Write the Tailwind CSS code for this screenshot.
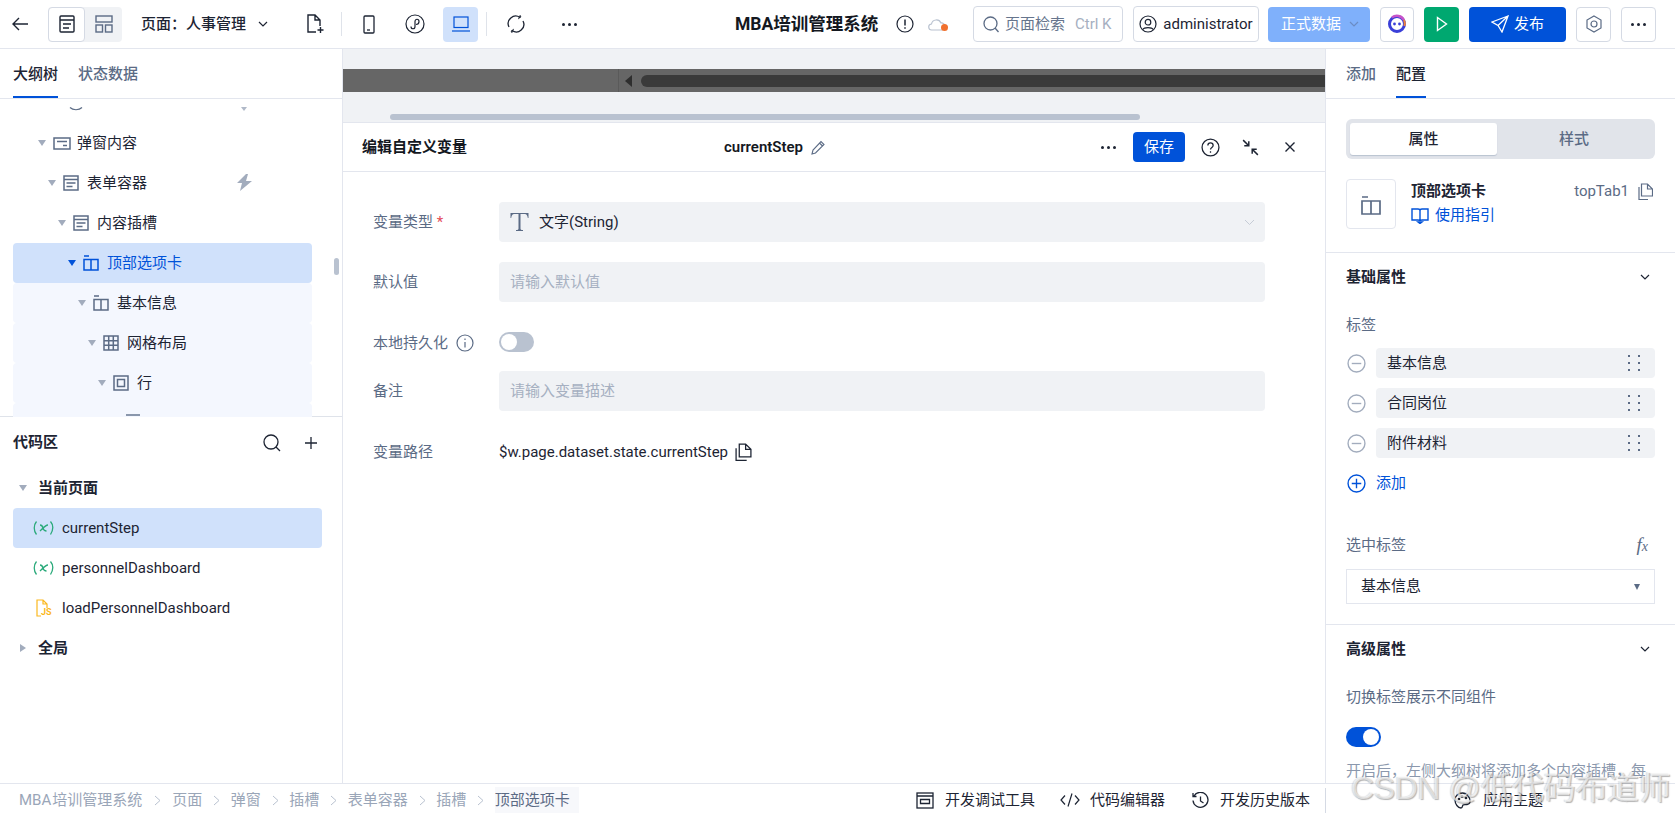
<!DOCTYPE html>
<html lang="zh-CN">
<head>
<meta charset="UTF-8">
<title>MBA 培训管理系统</title>
<script src="https://cdn.jsdelivr.net/npm/@tailwindcss/browser@4"></script>
</head>
<body class="relative h-screen overflow-hidden bg-white flex flex-col text-[15px] text-[#1d2433] font-['Roboto','Noto_Sans_CJK_SC',sans-serif]">

<!-- top bar -->
<header class="h-[49px] shrink-0 border-b border-[#e3e6ee] flex items-center relative">
  <svg class="w-[18px] h-[18px] ml-[11px] shrink-0" viewBox="0 0 18 18" fill="none" stroke="#1d2433" stroke-width="1.4"><path d="M2 9h15M8 3 2 9l6 6"/></svg>
  <div class="ml-[19px] w-[74px] h-[35px] rounded bg-[#f0f2f5] flex shrink-0">
    <div class="w-[37px] h-[35px] bg-white border border-[#d5dae4] rounded flex items-center justify-center">
      <svg class="w-[16px] h-[18px]" viewBox="0 0 16 18" fill="none" stroke="#1d2433" stroke-width="1.4"><rect x="1" y="1" width="14" height="16" rx="1"/><path d="M1 5h14M4 9h8M4 13h6"/></svg>
    </div>
    <div class="w-[37px] h-[35px] flex items-center justify-center">
      <svg class="w-[18px] h-[18px]" viewBox="0 0 18 18" fill="none" stroke="#5b6b85" stroke-width="1.4"><rect x="1" y="1" width="16" height="6"/><rect x="1" y="10" width="6.5" height="7"/><rect x="10.5" y="10" width="6.5" height="7"/></svg>
    </div>
  </div>
  <span class="ml-[19px] font-medium w-[107px] whitespace-nowrap">页面：人事管理</span>
  <svg class="w-[12px] h-[12px] ml-[9px]" viewBox="0 0 12 12" fill="none" stroke="#1d2433" stroke-width="1.2"><path d="m2 4 4 4 4-4"/></svg>
  <svg class="w-[18px] h-[20px] ml-[37px]" viewBox="0 0 18 20" fill="none" stroke="#1d2433" stroke-width="1.4"><path d="M10 18H2V1h7l5 5v6M9 1v5h5M11.500 16h6M14.500 13v6"/></svg>
  <div class="w-px h-[24px] bg-[#dfe3ea] ml-[17px]"></div>
  <svg class="w-[12px] h-[19px] ml-[21px]" viewBox="0 0 12 19" fill="none" stroke="#1d2433" stroke-width="1.3"><rect x="1" y="1" width="10" height="17" rx="1"/><path d="M4 15h3"/></svg>
  <svg class="w-[20px] h-[20px] ml-[30px]" viewBox="0 0 20 20" fill="none" stroke="#1d2433" stroke-width="1.2"><circle cx="10" cy="10" r="9"/><path d="M6 12.500c0 3 4 3 4 0v-5c0-3 4-3 4 0s-2 3-3 3"/></svg>
  <div class="ml-[18px] w-[35px] h-[35px] rounded bg-[#d0e1fb] flex items-center justify-center">
    <svg class="w-[18px] h-[16px]" viewBox="0 0 18 16" fill="none" stroke="#0052d9" stroke-width="1.2"><rect x="2" y="1" width="14" height="10.500"/><path d="M0 15h18"/></svg>
  </div>
  <div class="w-px h-[24px] bg-[#dfe3ea] ml-[8px]"></div>
  <svg class="w-[18px] h-[18px] ml-[20px]" viewBox="0 0 18 18" fill="none" stroke="#1d2433" stroke-width="1.3"><path d="M2 12A7.500 7.500 0 0 1 13 2.500M16 6a7.500 7.500 0 0 1-11 9.500"/><path d="m11 4 3-2-1-2M7 14l-3 2 1 2" fill="#1d2433" stroke-width=".6"/></svg>
  <div class="ml-[37px] flex gap-[3px]"><i class="w-[3px] h-[3px] rounded-full bg-[#1d2433]"></i><i class="w-[3px] h-[3px] rounded-full bg-[#1d2433]"></i><i class="w-[3px] h-[3px] rounded-full bg-[#1d2433]"></i></div>

  <span class="ml-[158px] text-[17.500px] font-bold whitespace-nowrap text-[#14181f] w-[145px]">MBA培训管理系统</span>
  <svg class="w-[18px] h-[18px] ml-[16px]" viewBox="0 0 18 18" fill="none" stroke="#1d2433" stroke-width="1.2"><circle cx="9" cy="9" r="8"/><path d="M9 4.500v6M9 12.300v1.500" stroke-width="1.5"/></svg>
  <span class="relative ml-[14px] w-[18px] h-[14px]">
    <svg class="w-[18px] h-[14px]" viewBox="0 0 18 14" fill="none" stroke="#b9c2d0" stroke-width="1.2"><path d="M4 13a3 3 0 0 1-.5-6A5 5 0 0 1 13 6a3.500 3.500 0 0 1 1 7z"/></svg>
    <i class="absolute right-[-2px] bottom-0 w-[7px] h-[7px] rounded-full bg-[#f0702e]"></i>
  </span>
  <div class="ml-[27px] w-[150px] h-[36px] border border-[#d5dae4] rounded flex items-center pl-[9px] whitespace-nowrap shrink-0">
    <svg class="w-[16px] h-[17px] shrink-0" viewBox="0 0 16 17" fill="none" stroke="#5b6b85" stroke-width="1.3"><circle cx="7.500" cy="7.500" r="6.500"/><path d="m12 12 3.500 4"/></svg>
    <span class="ml-[6px] text-[#66758d] w-[60px]">页面检索</span>
    <span class="ml-[10px] text-[#a6b0c1]">Ctrl K</span>
  </div>
  <div class="ml-[10px] w-[126px] h-[36px] border border-[#d5dae4] rounded flex items-center justify-center gap-[6px] shrink-0">
    <svg class="w-[18px] h-[18px]" viewBox="0 0 18 18" fill="none" stroke="#1d2433" stroke-width="1.2"><circle cx="9" cy="9" r="8"/><circle cx="9" cy="7.200" r="2.800"/><path d="M4 14.500c1-2.500 9-2.500 10 0"/></svg>
    <span>administrator</span>
  </div>
  <div class="ml-[9px] w-[102px] h-[35px] rounded bg-[#7fb0fb] text-white flex items-center pl-[13px] shrink-0">
    <span class="w-[60px] whitespace-nowrap">正式数据</span>
    <svg class="w-[12px] h-[12px] ml-[7px]" viewBox="0 0 12 12" fill="none" stroke="#6b8cc4" stroke-width="1.2"><path d="m2 4 4 4 4-4"/></svg>
  </div>
  <div class="ml-[10px] w-[34px] h-[35px] rounded border border-[#d5dae4] flex items-center justify-center shrink-0">
    <svg class="w-[20px] h-[20px]" viewBox="0 0 20 20" fill="none"><circle cx="10" cy="10" r="7.500" stroke="#3a3fd8" stroke-width="3"/><path d="M5 3.500A8 8 0 0 1 17 6" stroke="#c653c9" stroke-width="2.500"/><path d="M17 6a8 8 0 0 1 .5 6" stroke="#f0823c" stroke-width="2"/><circle cx="7.500" cy="10" r="1.400" fill="#3a3fd8"/><circle cx="12.500" cy="10" r="1.400" fill="#3a3fd8"/></svg>
  </div>
  <div class="ml-[10px] w-[35px] h-[35px] rounded bg-[#00a870] flex items-center justify-center shrink-0">
    <svg class="w-[12px] h-[16px]" viewBox="0 0 12 16" fill="none" stroke="#fff" stroke-width="1.4"><path d="M1.500 1.500v13L10.500 8z"/></svg>
  </div>
  <div class="ml-[10px] w-[97px] h-[35px] rounded bg-[#0052d9] text-white flex items-center justify-center gap-[5px] shrink-0">
    <svg class="w-[18px] h-[18px]" viewBox="0 0 18 18" fill="none" stroke="#fff" stroke-width="1.3"><path d="M17 1 1 7l6 3.500L11 17zM7 10.500 17 1"/></svg>
    <span>发布</span>
  </div>
  <div class="ml-[10px] w-[35px] h-[35px] rounded border border-[#d5dae4] flex items-center justify-center shrink-0">
    <svg class="w-[16px] h-[18px]" viewBox="0 0 16 18" fill="none" stroke="#5b6b85" stroke-width="1.2"><path d="M8 1 15 5v8l-7 4-7-4V5z"/><circle cx="8" cy="9" r="3"/></svg>
  </div>
  <div class="ml-[10px] w-[35px] h-[35px] rounded border border-[#d5dae4] flex items-center justify-center gap-[3px] shrink-0"><i class="w-[3px] h-[3px] rounded-full bg-[#1d2433]"></i><i class="w-[3px] h-[3px] rounded-full bg-[#1d2433]"></i><i class="w-[3px] h-[3px] rounded-full bg-[#1d2433]"></i></div>
</header>

<div class="flex-1 min-h-0 flex">
  <!-- left panel -->
  <aside class="w-[343px] shrink-0 border-r border-[#e3e6ee] flex flex-col">
    <div class="h-[50px] shrink-0 border-b border-[#e3e6ee] flex pl-[13px] gap-[20px] relative">
      <span class="h-[49px] leading-[51px] font-medium border-b-2 border-[#0052d9]">大纲树</span>
      <span class="h-[49px] leading-[51px] font-medium text-[#5b6b85]">状态数据</span>
    </div>
    <div class="h-[317px] shrink-0 pt-[8px] pl-[13px] pr-[30px] relative">
      <div class="h-[310px] overflow-hidden">
        <div class="h-10 -mt-[24px] relative">
          <svg class="absolute left-[56px] top-[22px] w-[14px] h-[8px]" viewBox="0 0 14 8" fill="none" stroke="#5b6b85" stroke-width="1.2"><path d="M1 2.500c3 3 9 3 12 0"/></svg>
          <i class="absolute left-[228px] top-[24px] w-0 h-0 border-x-[3px] border-x-transparent border-t-[4px] border-t-[#b0b9c8]"></i>
        </div>
        <div class="h-10 flex items-center pl-[25px]">
          <i class="w-0 h-0 border-x-[4.500px] border-x-transparent border-t-[6px] border-t-[#a2acbd]"></i>
          <svg class="ml-[7px] w-[18px] h-[13px]" viewBox="0 0 18 13" fill="none" stroke="#5b6b85" stroke-width="1.5"><rect x="1" y="1" width="16" height="11"/><path d="M4 4.500h10M10 8.500h4"/></svg>
          <span class="ml-[6px]">弹窗内容</span>
        </div>
        <div class="h-10 flex items-center pl-[35px] relative">
          <i class="w-0 h-0 border-x-[4.500px] border-x-transparent border-t-[6px] border-t-[#a2acbd]"></i>
          <svg class="ml-[7px] w-[16px] h-[16px]" viewBox="0 0 16 16" fill="none" stroke="#5b6b85" stroke-width="1.5"><rect x="1" y="1" width="14" height="14"/><path d="M1 4.500h14M3.500 8h9M3.500 11.500h6"/></svg>
          <span class="ml-[8px]">表单容器</span>
          <svg class="absolute left-[223px] top-[11px] w-[17px] h-[17px]" viewBox="0 0 17 17" fill="#a2acbd"><path d="M10 0 1 9h5l-2 8 12-10h-6l2-7z"/></svg>
        </div>
        <div class="h-10 flex items-center pl-[45px]">
          <i class="w-0 h-0 border-x-[4.500px] border-x-transparent border-t-[6px] border-t-[#a2acbd]"></i>
          <svg class="ml-[7px] w-[16px] h-[16px]" viewBox="0 0 16 16" fill="none" stroke="#5b6b85" stroke-width="1.5"><rect x="1" y="1" width="14" height="14"/><path d="M1 4.500h14M3.500 8h9M3.500 11.500h6"/></svg>
          <span class="ml-[8px]">内容插槽</span>
        </div>
        <div class="h-10 flex items-center pl-[55px] bg-[#d0e1fb] rounded text-[#0052d9]">
          <i class="w-0 h-0 border-x-[4.500px] border-x-transparent border-t-[6px] border-t-[#0052d9]"></i>
          <svg class="ml-[7px] w-[16px] h-[16px]" viewBox="0 0 16 16" fill="none" stroke="#0052d9" stroke-width="1.5"><path d="M1 1h5M1 4.500h14V15H1zM8 4.500V15"/></svg>
          <span class="ml-[8px]">顶部选项卡</span>
        </div>
        <div class="h-10 flex items-center pl-[65px] bg-[#f4f7fe] rounded">
          <i class="w-0 h-0 border-x-[4.500px] border-x-transparent border-t-[6px] border-t-[#a2acbd]"></i>
          <svg class="ml-[7px] w-[16px] h-[16px]" viewBox="0 0 16 16" fill="none" stroke="#5b6b85" stroke-width="1.5"><path d="M1 1h5M1 4.500h14V15H1zM8 4.500V15"/></svg>
          <span class="ml-[8px]">基本信息</span>
        </div>
        <div class="h-10 flex items-center pl-[75px] bg-[#f4f7fe] rounded">
          <i class="w-0 h-0 border-x-[4.500px] border-x-transparent border-t-[6px] border-t-[#a2acbd]"></i>
          <svg class="ml-[7px] w-[16px] h-[16px]" viewBox="0 0 16 16" fill="none" stroke="#5b6b85" stroke-width="1.5"><rect x="1" y="1" width="14" height="14"/><path d="M5.700 1v14M10.300 1v14M1 5.700h14M1 10.300h14"/></svg>
          <span class="ml-[8px]">网格布局</span>
        </div>
        <div class="h-10 flex items-center pl-[85px] bg-[#f4f7fe] rounded">
          <i class="w-0 h-0 border-x-[4.500px] border-x-transparent border-t-[6px] border-t-[#a2acbd]"></i>
          <svg class="ml-[7px] w-[16px] h-[16px]" viewBox="0 0 16 16" fill="none" stroke="#5b6b85" stroke-width="1.5"><rect x="1" y="1" width="14" height="14"/><rect x="4.500" y="4.500" width="7" height="7"/></svg>
          <span class="ml-[8px]">行</span>
        </div>
        <div class="h-10 bg-[#f4f7fe] rounded relative">
          <i class="absolute left-[113px] top-[11px] w-[14px] h-[2px] bg-[#8a97ac]"></i>
        </div>
      </div>
      <i class="absolute left-[334px] top-[159px] w-[5px] h-[17px] rounded-full bg-[#b9c2d0]"></i>
    </div>
    <div class="border-t border-[#dfe3ea] flex-1 px-[13px] pr-[20px]">
      <div class="h-[51px] flex items-center justify-between font-semibold">
        <span>代码区</span>
        <div class="flex items-center gap-[24px] pr-[5px]">
          <svg class="w-[18px] h-[18px]" viewBox="0 0 18 18" fill="none" stroke="#1d2433" stroke-width="1.3"><circle cx="8" cy="8" r="7"/><path d="m13 13 4 4"/></svg>
          <svg class="w-[12px] h-[12px]" viewBox="0 0 12 12" fill="none" stroke="#1d2433" stroke-width="1.3"><path d="M6 0v12M0 6h12"/></svg>
        </div>
      </div>
      <div class="h-10 flex items-center pl-[6px] font-semibold">
        <i class="w-0 h-0 border-x-[4.500px] border-x-transparent border-t-[6px] border-t-[#a2acbd]"></i>
        <span class="ml-[11px]">当前页面</span>
      </div>
      <div class="h-10 flex items-center pl-[20px] bg-[#d0e1fb] rounded">
        <svg class="w-[21px] h-[16px]" viewBox="0 0 21 16" fill="none" stroke="#2baa7b" stroke-width="1.3"><path d="M3.500 1.500C.5 5 .5 11 3.500 14.500M17.500 1.500c3 3.500 3 8 0 13M7 5c2 0 2.500 1 3 3s1.500 3 3.500 3M15 5c-2.500 0-5 3-8 6"/></svg>
        <span class="ml-[8px]">currentStep</span>
      </div>
      <div class="h-10 flex items-center pl-[20px]">
        <svg class="w-[21px] h-[16px]" viewBox="0 0 21 16" fill="none" stroke="#2baa7b" stroke-width="1.3"><path d="M3.500 1.500C.5 5 .5 11 3.500 14.500M17.500 1.500c3 3.500 3 8 0 13M7 5c2 0 2.500 1 3 3s1.500 3 3.500 3M15 5c-2.500 0-5 3-8 6"/></svg>
        <span class="ml-[8px]">personnelDashboard</span>
      </div>
      <div class="h-10 flex items-center pl-[23px]">
        <span class="relative w-[17px] h-[18px]">
          <svg class="w-[17px] h-[18px]" viewBox="0 0 17 18" fill="none" stroke="#fbb81e" stroke-width="1.2"><path d="M5 17H1V1h6l4 4v4M7 1v4h4"/></svg>
          <span class="absolute left-[5px] top-[8px] text-[9px] leading-[10px] font-bold text-[#fbb81e]">JS</span>
        </span>
        <span class="ml-[9px]">loadPersonnelDashboard</span>
      </div>
      <div class="h-10 flex items-center pl-[7px] font-semibold">
        <i class="w-0 h-0 border-y-[4.500px] border-y-transparent border-l-[6px] border-l-[#a2acbd]"></i>
        <span class="ml-[12px]">全局</span>
      </div>
    </div>
  </aside>

  <!-- canvas and variable editor -->
  <main class="flex-1 min-w-0 flex flex-col">
    <div class="h-[74px] shrink-0 bg-[#f0f2f5] border-b border-[#e3e6ee] pt-[20px] relative">
      <div class="h-[23px] bg-[#666666] flex items-center">
        <div class="w-[276px] h-full border-r border-[#5a5a5a] shrink-0"></div>
        <i class="ml-[6px] w-0 h-0 border-y-[6px] border-y-transparent border-r-[7px] border-r-[#2e2e2e]"></i>
        <div class="ml-[9px] flex-1 h-[12px] rounded-l-full bg-[#3a3a3a]"></div>
      </div>
      <i class="absolute left-[47px] top-[65px] w-[750px] h-[6px] rounded-full bg-[#b9c2d0]"></i>
    </div>
    <div class="h-[49px] shrink-0 border-b border-[#e3e6ee] flex items-center relative pl-[19px]">
      <span class="font-semibold text-[#14181f] w-[105px] whitespace-nowrap">编辑自定义变量</span>
      <span class="absolute left-[381px] font-semibold text-[#14181f]">currentStep</span>
      <svg class="absolute left-[468px] top-[17px] w-[15px] h-[15px]" viewBox="0 0 15 15" fill="none" stroke="#5b6b85" stroke-width="1.1"><path d="M1 14l1-4 8-8.500 3 3L4.500 13zM8.500 3l3 3"/></svg>
      <div class="ml-auto flex items-center">
        <div class="flex gap-[3px]"><i class="w-[3px] h-[3px] rounded-full bg-[#1d2433]"></i><i class="w-[3px] h-[3px] rounded-full bg-[#1d2433]"></i><i class="w-[3px] h-[3px] rounded-full bg-[#1d2433]"></i></div>
        <div class="ml-[17px] w-[52px] h-[30px] rounded bg-[#0052d9] text-white flex items-center justify-center">保存</div>
        <svg class="ml-[16px] w-[19px] h-[19px]" viewBox="0 0 18 18" fill="none" stroke="#1d2433" stroke-width="1.2"><circle cx="9" cy="9" r="8"/><path d="M6.500 7c0-3.300 5-3.300 5 0 0 2-2.500 1.800-2.500 4M9 12.500v1.500"/></svg>
        <svg class="ml-[22px] w-[17px] h-[17px]" viewBox="0 0 15 15" fill="none" stroke="#1d2433" stroke-width="1.3"><path d="m1 1 5 5M6 2v4H2M14 14 9 9M9 13V9h4"/></svg>
        <svg class="ml-[26px] mr-[30px] w-[10px] h-[10px]" viewBox="0 0 10 10" fill="none" stroke="#1d2433" stroke-width="1.4"><path d="m.5.500 9 9M9.500.500l-9 9"/></svg>
      </div>
    </div>
    <div class="pt-[30px] pl-[30px] pr-[60px] text-[#5b6b85]">
      <div class="flex items-center h-10">
        <span class="w-[126px]">变量类型 <span class="text-[#e34d59]">*</span></span>
        <div class="flex-1 h-10 rounded bg-[#f0f2f5] flex items-center pl-[11px] pr-[10px] text-[#1d2433]">
          <svg class="w-[19px] h-[18px]" viewBox="0 0 18 18" fill="#5b6b85"><path d="M0 0h18v5h-.7c-.3-2-1-4-3-4H10V15.500c0 1 .7 1.500 2.500 1.500v1h-7v-1c1.800 0 2.500-.5 2.500-1.500V1H3.700c-2 0-2.700 2-3 4H0z"/></svg>
          <span class="ml-[10px]">文字(String)</span>
          <svg class="ml-auto w-[11px] h-[11px]" viewBox="0 0 11 11" fill="none" stroke="#c6ccd6" stroke-width="1"><path d="m1 3 4.500 4.500L10 3"/></svg>
        </div>
      </div>
      <div class="flex items-center h-10 mt-5">
        <span class="w-[126px]">默认值</span>
        <div class="flex-1 h-10 rounded bg-[#f0f2f5] flex items-center pl-[11px] text-[#a6b0c1]">请输入默认值</div>
      </div>
      <div class="flex items-center h-5 mt-[30px]">
        <span class="w-[126px] flex items-center h-5 pt-[2px]">本地持久化
          <svg class="ml-[8px] w-[18px] h-[18px]" viewBox="0 0 18 18" fill="none" stroke="#5b6b85" stroke-width="1.2"><circle cx="9" cy="9" r="8"/><path d="M9 8v5.500M9 4.500v1.500"/></svg>
        </span>
        <div class="w-[35px] h-5 rounded-full bg-[#b9c2d0] p-[2px]"><div class="w-4 h-4 rounded-full bg-white"></div></div>
      </div>
      <div class="flex items-center h-10 mt-[19px]">
        <span class="w-[126px]">备注</span>
        <div class="flex-1 h-10 rounded bg-[#f0f2f5] flex items-center pl-[11px] text-[#a6b0c1]">请输入变量描述</div>
      </div>
      <div class="flex items-center h-10 mt-[21px]">
        <span class="w-[126px]">变量路径</span>
        <span class="text-[#1d2433]">$w.page.dataset.state.currentStep</span>
        <svg class="ml-[7px] w-[17px] h-[18px]" viewBox="0 0 16 17" fill="none" stroke="#1d2433" stroke-width="1.2"><path d="M4 13V1h6l5 5v7zM10 1v5h5M1 5v11.500h10"/></svg>
      </div>
    </div>
  </main>

  <!-- right config panel -->
  <aside class="w-[350px] shrink-0 border-l border-[#e3e6ee] overflow-hidden">
    <div class="h-[50px] border-b border-[#e3e6ee] flex pl-[20px] gap-[20px]">
      <span class="h-[49px] leading-[51px] font-medium text-[#5b6b85]">添加</span>
      <span class="h-[49px] leading-[51px] font-medium border-b-2 border-[#0052d9]">配置</span>
    </div>
    <div class="px-[20px] pr-[20px]">
      <div class="mt-5 h-10 rounded-md bg-[#e1e4ea] p-[4px] flex font-medium">
        <div class="w-[147px] h-[32px] rounded-[3px] bg-white shadow-[0_1px_1px_#b9c2d0] flex items-center justify-center">属性</div>
        <div class="flex-1 flex items-center justify-center text-[#5b6b85]">样式</div>
      </div>
      <div class="mt-5 flex h-[50px]">
        <div class="w-[50px] h-[50px] border border-[#e3e6ee] rounded flex items-center justify-center shrink-0">
          <svg class="w-[20px] h-[19px] mt-[2px]" viewBox="0 0 20 19" fill="none" stroke="#5b6b85" stroke-width="1.7"><path d="M1 1h6M1 5h18v13H1zM10 5v13"/></svg>
        </div>
        <div class="ml-[15px] flex-1">
          <div class="flex items-center h-[24px]">
            <span class="font-semibold">顶部选项卡</span>
            <span class="ml-auto text-[#5b6b85]">topTab1</span>
            <svg class="ml-[9px] mr-[2px] w-[15px] h-[17px]" viewBox="0 0 15 17" fill="none" stroke="#5b6b85" stroke-width="1.2"><path d="M3.500 13V1h6l5 5v7zM9.500 1v5h5M1 4v12.500h9"/></svg>
          </div>
          <div class="flex items-center mt-[1px] text-[#0052d9]">
            <svg class="w-[18px] h-[17px]" viewBox="0 0 18 17" fill="none" stroke="#0052d9" stroke-width="1.4"><path d="M1 2h6c1 0 2 .5 2 1.500V14c0-.7-1-1-2-1H1zM17 2h-6c-1 0-2 .5-2 1.500V14c0-.7 1-1 2-1h6zM7 15h4l-2 1.500z"/></svg>
            <span class="ml-[6px]">使用指引</span>
          </div>
        </div>
      </div>
    </div>
    <div class="mt-[23px] border-t border-[#e3e6ee] px-[20px] pr-[20px]">
      <div class="h-[48px] flex items-center justify-between font-semibold">
        <span>基础属性</span>
        <svg class="w-[10px] h-[10px] mr-[5px]" viewBox="0 0 10 10" fill="none" stroke="#1d2433" stroke-width="1.2"><path d="m1 3 4 4 4-4"/></svg>
      </div>
      <div class="mt-[14px] text-[#5b6b85] leading-[20px]">标签</div>
      <div class="mt-[13px] flex flex-col gap-[10px]">
        <div class="flex items-center h-[30px]">
          <svg class="w-[19px] h-[19px] ml-px shrink-0" viewBox="0 0 18 18" fill="none" stroke="#a2acbd" stroke-width="1.3"><circle cx="9" cy="9" r="8"/><path d="M4.500 9h9"/></svg>
          <div class="ml-[10px] flex-1 h-[30px] rounded bg-[#f0f2f5] flex items-center pl-[11px]">基本信息
            <div class="ml-auto mr-[15px] grid grid-cols-2 gap-x-[8px] gap-y-[5px]"><i class="w-[2px] h-[2px] bg-[#5b6b85]"></i><i class="w-[2px] h-[2px] bg-[#5b6b85]"></i><i class="w-[2px] h-[2px] bg-[#5b6b85]"></i><i class="w-[2px] h-[2px] bg-[#5b6b85]"></i><i class="w-[2px] h-[2px] bg-[#5b6b85]"></i><i class="w-[2px] h-[2px] bg-[#5b6b85]"></i></div>
          </div>
        </div>
        <div class="flex items-center h-[30px]">
          <svg class="w-[19px] h-[19px] ml-px shrink-0" viewBox="0 0 18 18" fill="none" stroke="#a2acbd" stroke-width="1.3"><circle cx="9" cy="9" r="8"/><path d="M4.500 9h9"/></svg>
          <div class="ml-[10px] flex-1 h-[30px] rounded bg-[#f0f2f5] flex items-center pl-[11px]">合同岗位
            <div class="ml-auto mr-[15px] grid grid-cols-2 gap-x-[8px] gap-y-[5px]"><i class="w-[2px] h-[2px] bg-[#5b6b85]"></i><i class="w-[2px] h-[2px] bg-[#5b6b85]"></i><i class="w-[2px] h-[2px] bg-[#5b6b85]"></i><i class="w-[2px] h-[2px] bg-[#5b6b85]"></i><i class="w-[2px] h-[2px] bg-[#5b6b85]"></i><i class="w-[2px] h-[2px] bg-[#5b6b85]"></i></div>
          </div>
        </div>
        <div class="flex items-center h-[30px]">
          <svg class="w-[19px] h-[19px] ml-px shrink-0" viewBox="0 0 18 18" fill="none" stroke="#a2acbd" stroke-width="1.3"><circle cx="9" cy="9" r="8"/><path d="M4.500 9h9"/></svg>
          <div class="ml-[10px] flex-1 h-[30px] rounded bg-[#f0f2f5] flex items-center pl-[11px]">附件材料
            <div class="ml-auto mr-[15px] grid grid-cols-2 gap-x-[8px] gap-y-[5px]"><i class="w-[2px] h-[2px] bg-[#5b6b85]"></i><i class="w-[2px] h-[2px] bg-[#5b6b85]"></i><i class="w-[2px] h-[2px] bg-[#5b6b85]"></i><i class="w-[2px] h-[2px] bg-[#5b6b85]"></i><i class="w-[2px] h-[2px] bg-[#5b6b85]"></i><i class="w-[2px] h-[2px] bg-[#5b6b85]"></i></div>
          </div>
        </div>
      </div>
      <div class="mt-[15px] h-[20px] flex items-center text-[#0052d9]">
        <svg class="w-[19px] h-[19px] ml-px shrink-0" viewBox="0 0 18 18" fill="none" stroke="#0052d9" stroke-width="1.3"><circle cx="9" cy="9" r="8"/><path d="M4.500 9h9M9 4.500v9"/></svg>
        <span class="ml-[10px]">添加</span>
      </div>
      <div class="mt-[42px] h-[20px] flex items-center justify-between text-[#5b6b85]">
        <span>选中标签</span>
        <span class="mr-[7px] font-['Liberation_Serif',serif] italic text-[19px]">f<span class="text-[14px]">x</span></span>
      </div>
      <div class="mt-[14px] h-[35px] border border-[#e3e6ee] flex items-center pl-[14px]">基本信息
        <i class="ml-auto mr-[14px] w-0 h-0 border-x-[3.500px] border-x-transparent border-t-[6px] border-t-[#5b6b85]"></i>
      </div>
    </div>
    <div class="mt-[20px] border-t border-[#e3e6ee] px-[20px] pr-[20px]">
      <div class="h-[48px] flex items-center justify-between font-semibold">
        <span>高级属性</span>
        <svg class="w-[10px] h-[10px] mr-[5px]" viewBox="0 0 10 10" fill="none" stroke="#1d2433" stroke-width="1.2"><path d="m1 3 4 4 4-4"/></svg>
      </div>
      <div class="mt-[14px] text-[#5b6b85] leading-[20px]">切换标签展示不同组件</div>
      <div class="mt-[20px] w-[35px] h-5 rounded-full bg-[#0052d9] p-[2px] flex justify-end"><div class="w-4 h-4 rounded-full bg-white"></div></div>
      <p class="mt-[14px] text-[#8b98ad] leading-[20px]">开启后，左侧大纲树将添加多个内容插槽，每个插槽对应一个标签</p>
    </div>
  </aside>
</div>

<!-- bottom status bar -->
<footer class="h-[35px] shrink-0 border-t border-[#e3e6ee] flex items-start bg-white relative">
  <div class="h-[30px] mt-[1px] ml-[19px] flex items-center text-[#9aa6b8] whitespace-nowrap w-[561px]">
    <span>MBA<span class="ml-px">培训管理系统</span></span>
    <svg class="mx-[11.500px] w-[7px] h-[11px] shrink-0" viewBox="0 0 7 11" fill="none" stroke="#b9c2d0"><path d="m1 1 5 4.500L1 10"/></svg>
    <span>页面</span>
    <svg class="mx-[10.750px] w-[7px] h-[11px] shrink-0" viewBox="0 0 7 11" fill="none" stroke="#b9c2d0"><path d="m1 1 5 4.500L1 10"/></svg>
    <span>弹窗</span>
    <svg class="mx-[10.750px] w-[7px] h-[11px] shrink-0" viewBox="0 0 7 11" fill="none" stroke="#b9c2d0"><path d="m1 1 5 4.500L1 10"/></svg>
    <span>插槽</span>
    <svg class="mx-[10.750px] w-[7px] h-[11px] shrink-0" viewBox="0 0 7 11" fill="none" stroke="#b9c2d0"><path d="m1 1 5 4.500L1 10"/></svg>
    <span>表单容器</span>
    <svg class="mx-[10.750px] w-[7px] h-[11px] shrink-0" viewBox="0 0 7 11" fill="none" stroke="#b9c2d0"><path d="m1 1 5 4.500L1 10"/></svg>
    <span>插槽</span>
    <svg class="mx-[10.750px] w-[7px] h-[11px] shrink-0" viewBox="0 0 7 11" fill="none" stroke="#b9c2d0"><path d="m1 1 5 4.500L1 10"/></svg>
    <span class="bg-[#f7f8fb] pr-[9px] h-[26px] leading-[26px] text-[#5b6b85]">顶部选项卡</span>
  </div>
  <div class="h-[30px] mt-[1px] ml-[336px] flex items-center whitespace-nowrap">
    <svg class="w-[18px] h-[17px]" viewBox="0 0 18 17" fill="none" stroke="#1d2433" stroke-width="1.3"><rect x="1" y="1" width="16" height="15"/><path d="M1 4h16M4.500 7.500h9v4h-9z"/></svg>
    <span class="ml-[11px]">开发调试工具</span>
    <svg class="ml-[25px] w-[20px] h-[14px]" viewBox="0 0 20 14" fill="none" stroke="#1d2433" stroke-width="1.2"><path d="M5 2.500 1 7l4 4.500M15 2.500 19 7l-4 4.500M12 .5 8 13.500"/></svg>
    <span class="ml-[10px]">代码编辑器</span>
    <svg class="ml-[27px] w-[17px] h-[17px]" viewBox="0 0 17 17" fill="none" stroke="#1d2433" stroke-width="1.3"><path d="M2 4a7.500 7.500 0 1 1-1 4.500M1 1v3.500h3.500M8.500 4.500V9l3 2"/></svg>
    <span class="ml-[11px]">开发历史版本</span>
    <div class="ml-[15px] w-px h-[25px] bg-[#d5dae4]"></div>
    <svg class="ml-[128px] w-[17px] h-[17px]" viewBox="0 0 17 17" fill="none" stroke="#1d2433" stroke-width="1.3"><path d="M8.500 1C4 1 1 4 1 8c0 4 3 8 6 8 2 0 1-2 2-3s6 1 7-3c.6-4-3-9-7.500-9z"/><circle cx="5" cy="7" r=".7"/><circle cx="8" cy="4.500" r=".7"/><circle cx="12" cy="6" r=".7"/></svg>
    <span class="ml-[12px]">应用主题</span>
  </div>
</footer>

<div class="absolute left-[1351px] top-[768px] whitespace-nowrap text-[32px] leading-[40px] tracking-[-.4px] text-white/60 [text-shadow:1px_1px_1px_rgba(90,90,90,.45),-1px_0_1px_rgba(90,90,90,.2)] font-['Liberation_Sans','Noto_Sans_CJK_SC',sans-serif] pointer-events-none">CSDN @低代码布道师</div>

</body>
</html>
